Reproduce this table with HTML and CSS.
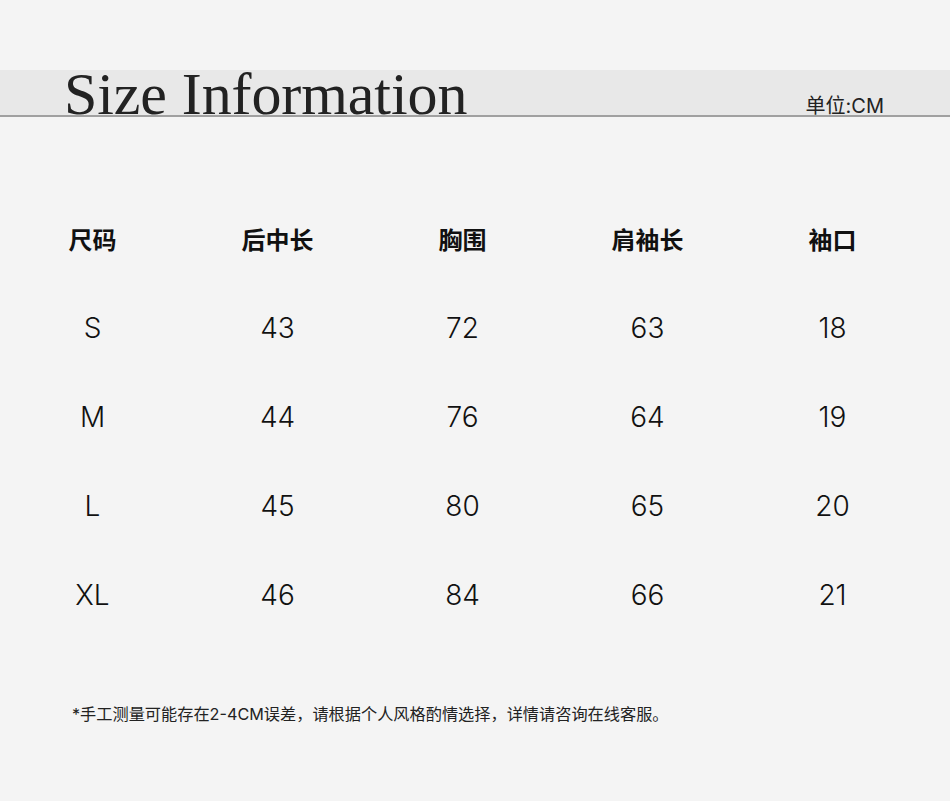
FILE: index.html
```html
<!DOCTYPE html>
<html lang="zh">
<head>
<meta charset="utf-8">
<link rel="stylesheet" href="styles.css">
</head>
<body>
<div class="page">
  <header class="band">
    <h1 class="title">Size Information</h1>
    <span class="unit">单位:CM</span>
  </header>
  <div class="table">
    <div class="cell head">尺码</div>
    <div class="cell head">后中长</div>
    <div class="cell head">胸围</div>
    <div class="cell head">肩袖长</div>
    <div class="cell head">袖口</div>

    <div class="cell">S</div><div class="cell">43</div><div class="cell">72</div><div class="cell">63</div><div class="cell">18</div>
    <div class="cell">M</div><div class="cell">44</div><div class="cell">76</div><div class="cell">64</div><div class="cell">19</div>
    <div class="cell">L</div><div class="cell">45</div><div class="cell">80</div><div class="cell">65</div><div class="cell">20</div>
    <div class="cell">XL</div><div class="cell">46</div><div class="cell">84</div><div class="cell">66</div><div class="cell">21</div>
  </div>
  <p class="note">*手工测量可能存在2-4CM误差，请根据个人风格酌情选择，详情请咨询在线客服。</p>
</div>
</body>
</html>
```
FILE: styles.css
```css
html, body {
  margin: 0;
  padding: 0;
  background: #f4f4f4;
}
.page {
  width: 950px;
  height: 801px;
  padding-top: 70px;
  box-sizing: border-box;
  font-family: Inter, "Noto Sans CJK SC", sans-serif;
  color: #111;
}
.band {
  height: 45px;
  background: #e8e8e8;
  border-bottom: 2px solid #a0a0a0;
  display: flex;
  align-items: flex-end;
  justify-content: space-between;
  padding: 0 66px 0 64px;
  position: relative;
}
.title {
  margin: 0;
  font-family: "Liberation Serif", serif;
  font-weight: 400;
  font-size: 60px;
  line-height: 1;
  letter-spacing: -0.1px;
  color: #222;
  position: relative;
  top: 9px;
}
.unit {
  font-family: Inter, "Noto Sans CJK SC", sans-serif;
  font-size: 20px;
  line-height: 1;
  color: #222;
  position: relative;
  top: 1px;
}
.table {
  margin-top: 77px;
  display: grid;
  grid-template-columns: repeat(5, 185px);
  grid-auto-rows: 89px;
}
.cell {
  display: flex;
  align-items: center;
  justify-content: center;
  font-family: Inter, "Noto Sans CJK SC", sans-serif;
  font-size: 28px;
  font-weight: 300;
  color: #111;
}
.cell.head {
  font-family: "Noto Sans CJK SC", sans-serif;
  font-size: 24px;
  font-weight: 700;
  color: #111;
}
.note {
  margin: 62px 0 0 72px;
  font-family: Inter, "Noto Sans CJK SC", sans-serif;
  font-size: 16.2px;
  color: #222;
}
```
